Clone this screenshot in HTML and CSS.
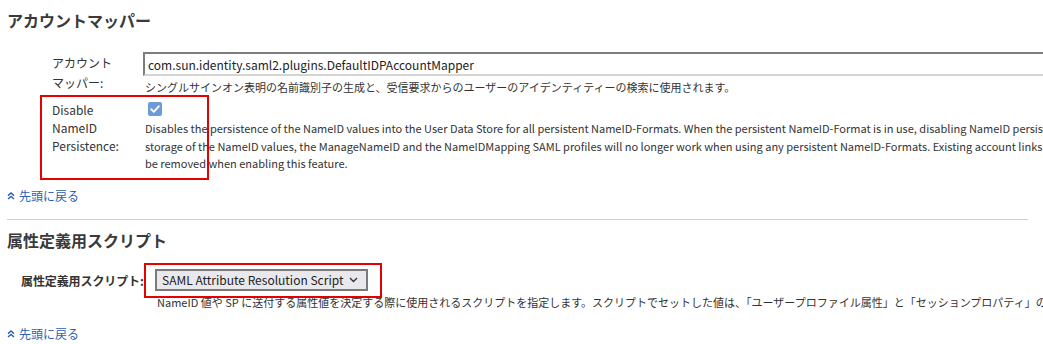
FILE: index.html
```html
<!DOCTYPE html>
<html>
<head>
	<title>アカウントマッパー</title>
	<meta charset="utf8"/>
	<link rel="stylesheet" href="styles.css">
</head>
<body>
	<div class="page">
		<h2 class="section-title">アカウントマッパー</h2>

		<div class="field-row first">
			<label class="field-label" for="mapper">アカウント<br>マッパー:</label>
			<div class="field-body">
				<input type="text" id="mapper" class="text-input" value="com.sun.identity.saml2.plugins.DefaultIDPAccountMapper"/>
				<p class="help ja">シングルサインオン表明の名前識別子の生成と、受信要求からのユーザーのアイデンティティーの検索に使用されます。</p>
			</div>
		</div>

		<div class="field-row second">
			<label class="field-label tall" for="persist">Disable<br>NameID<br>Persistence:</label>
			<div class="field-body">
				<span class="check" id="persist">
					<svg width="14" height="14" viewBox="0 0 14 14"><rect width="14" height="14" rx="2" fill="#6c9bd6"/><path d="M3.2 7.3 L5.8 9.8 L10.8 4.3" fill="none" stroke="#fff" stroke-width="1.9" stroke-linecap="round" stroke-linejoin="round"/></svg>
				</span>
				<p class="help desc">Disables the persistence of the NameID values into the User Data Store for all persistent NameID-Formats. When the persistent NameID-Format is in use, disabling NameID persistence means that without the<br>storage of the NameID values, the ManageNameID and the NameIDMapping SAML profiles will no longer work when using any persistent NameID-Formats. Existing account links will not<br>be removed when enabling this feature.</p>
			</div>
			<div class="highlight box-one"></div>
		</div>

		<a class="top-link" href="#">
			<svg width="8" height="8" viewBox="0 0 8 8"><path d="M1 3.6 L4 1 L7 3.6 M1 7 L4 4.4 L7 7" fill="none" stroke="#2d5fb2" stroke-width="1.4"/></svg>
			先頭に戻る
		</a>

		<hr class="divider"/>

		<h2 class="section-title">属性定義用スクリプト</h2>

		<div class="script-row">
			<label class="script-label" for="script">属性定義用スクリプト:</label>
			<div class="script-body">
				<div class="select-wrap">
					<select id="script" class="select">
						<option>SAML Attribute Resolution Script</option>
					</select>
					<svg class="chevron" width="9" height="6" viewBox="0 0 9 6"><path d="M1 1 L4.5 4.5 L8 1" fill="none" stroke="#333" stroke-width="1.4"/></svg>
				</div>
				<p class="help ja script-help">NameID 値や SP に送付する属性値を決定する際に使用されるスクリプトを指定します。スクリプトでセットした値は、「ユーザープロファイル属性」と「セッションプロパティ」の両方に反映されます。</p>
			</div>
			<div class="highlight box-two"></div>
		</div>

		<a class="top-link last" href="#">
			<svg width="8" height="8" viewBox="0 0 8 8"><path d="M1 3.6 L4 1 L7 3.6 M1 7 L4 4.4 L7 7" fill="none" stroke="#2d5fb2" stroke-width="1.4"/></svg>
			先頭に戻る
		</a>
	</div>
</body>
</html>
```

FILE: styles.css
```css
html {
	overflow: hidden;
}

body {
	margin: 0;
	font-family: "Noto Sans CJK JP", "Noto Sans", sans-serif;
	color: #333;
	background: #fff;
}

.page {
	width: 1021px;
	padding: 0 0 0 7px;
}

.section-title {
	font-size: 16px;
	font-weight: bold;
	line-height: 20px;
	margin: 0;
	padding-top: 10px;
	color: #3a3a3a;
}

/* account mapper rows */

.field-row {
	display: flex;
	position: relative;
	padding-left: 45px;
}

.field-row.first {
	margin-top: 22px;
}

.field-row.second {
	margin-top: 4px;
}

.field-label {
	width: 91px;
	flex: none;
	font-size: 12px;
	line-height: 20px;
	padding-top: 1px;
}

.field-label.tall {
	line-height: 18px;
	padding-top: 1px;
}

.field-body {
	flex: none;
	width: 1000px;
}

.text-input {
	display: block;
	box-sizing: border-box;
	width: 1000px;
	height: 24px;
	margin: 0;
	padding: 0 3px;
	font-family: inherit;
	font-size: 12px;
	color: #222;
	border-style: solid;
	border-width: 2px;
	border-color: #7d7d7d #d4d4d4 #d4d4d4 #7d7d7d;
	outline: none;
}

.help {
	margin: 0;
	font-size: 11px;
	line-height: 17.5px;
	padding-left: 2px;
}

.help.ja {
	line-height: 18px;
	padding-top: 2px;
}

.check {
	display: block;
	width: 14px;
	height: 14px;
	margin: 0 0 0 5px;
	padding-top: 2px;
}

.check svg {
	display: block;
}

.desc {
	white-space: nowrap;
	padding-top: 4px;
}

.highlight {
	position: absolute;
	box-sizing: border-box;
	border: 2px solid #e60000;
	pointer-events: none;
}

.box-one {
	left: 33px;
	top: -5px;
	width: 169px;
	height: 85px;
}

.top-link {
	display: flex;
	width: fit-content;
	align-items: center;
	gap: 4px;
	font-size: 12px;
	line-height: 18px;
	color: #2d5fb2;
	text-decoration: none;
	margin-top: 14px;
}

.top-link svg {
	display: block;
}

.divider {
	border: none;
	border-top: 1px solid #d0d0d0;
	margin: 14px 0 0;
}

/* attribute script row */

.script-row {
	display: flex;
	position: relative;
	margin-top: 19px;
	padding-left: 14px;
}

.script-label {
	width: 134px;
	flex: none;
	white-space: nowrap;
	font-size: 12px;
	font-weight: bold;
	line-height: 19px;
	padding-top: 2px;
	letter-spacing: -0.1px;
}

.script-body {
	flex: none;
	width: 900px;
}

.select-wrap {
	position: relative;
	width: 213px;
}

.select {
	appearance: none;
	display: block;
	box-sizing: border-box;
	width: 213px;
	height: 22px;
	margin: 0;
	padding: 0 0 0 5px;
	font-family: inherit;
	font-size: 12px;
	color: #222;
	background: #e9e9ed;
	border: 2px solid #7a7a7a;
	border-radius: 0;
}

.chevron {
	position: absolute;
	right: 10px;
	top: 8px;
}

.script-help {
	white-space: nowrap;
	padding-top: 3px;
}

.box-two {
	left: 137px;
	top: -6px;
	width: 238px;
	height: 35px;
}
```
